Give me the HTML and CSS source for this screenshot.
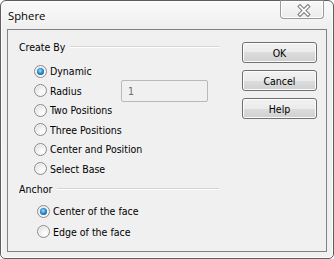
FILE: index.html
```html
<!DOCTYPE html>
<html>
<head>
<meta charset="utf-8">
<link rel="stylesheet" href="styles.css">
</head>
<body>
<div class="window">
  <div class="titlebar">
    <span class="title">Sphere</span>
    <div class="close">
      <svg width="44" height="18" viewBox="0 0 44 18">
        <path d="M20.5 5.5 L28.5 13.5 M28.5 5.5 L20.5 13.5" stroke="#7a7a7a" stroke-width="4" stroke-linecap="square" fill="none"/>
        <path d="M20.5 5.5 L28.5 13.5 M28.5 5.5 L20.5 13.5" stroke="#ffffff" stroke-width="2" stroke-linecap="square" fill="none"/>
      </svg>
    </div>
  </div>
  <div class="client">
    <div class="groups">
      <div class="group-head"><span>Create By</span><span class="rule"></span></div>
      <div class="options create">
        <div class="opt"><span class="radio on"></span><span>Dynamic</span></div>
        <div class="opt"><span class="radio"></span><span class="lbl-fixed">Radius</span><span class="textbox">1</span></div>
        <div class="opt"><span class="radio"></span><span>Two Positions</span></div>
        <div class="opt"><span class="radio"></span><span>Three Positions</span></div>
        <div class="opt"><span class="radio"></span><span>Center and Position</span></div>
        <div class="opt"><span class="radio"></span><span>Select Base</span></div>
      </div>
      <div class="group-head anchor-head"><span>Anchor</span><span class="rule"></span></div>
      <div class="options anchor">
        <div class="opt"><span class="radio on"></span><span>Center of the face</span></div>
        <div class="opt"><span class="radio"></span><span>Edge of the face</span></div>
      </div>
    </div>
    <div class="buttons">
      <div class="btn">OK</div>
      <div class="btn">Cancel</div>
      <div class="btn">Help</div>
    </div>
  </div>
</div>
</body>
</html>
```
FILE: styles.css
```css
html, body {
  margin: 0;
  padding: 0;
  background: #ffffff;
}
body {
  width: 334px;
  height: 259px;
  overflow: hidden;
  font-family: "DejaVu Sans Condensed", "DejaVu Sans", sans-serif;
  font-size: 10.5px;
  color: #000;
}
.window {
  box-sizing: border-box;
  width: 334px;
  height: 259px;
  border: 1px solid #5e5e5e;
  border-radius: 6px 6px 5px 5px;
  background: linear-gradient(#fafafa, #efefef 28px, #f0f0f0);
  box-shadow: inset 0 0 0 1px #fdfdfd;
  display: flex;
  flex-direction: column;
}
.titlebar {
  height: 28px;
  display: flex;
  align-items: center;
  padding-left: 7px;
}
.title {
  font-family: "Open Sans", "Noto Sans", sans-serif;
  font-size: 11.3px;
  color: #000;
  flex: 1;
}
.close {
  align-self: flex-start;
  margin-top: -1px;
  margin-right: 9px;
  width: 44px;
  height: 19px;
  box-sizing: border-box;
  border: 1px solid #9a9a9a;
  border-top-color: #7a7a7a;
  border-radius: 0 0 4px 4px;
  background: linear-gradient(#f8f8f8, #ececec);
  box-shadow: inset 0 0 0 1px #ffffff;
  display: flex;
}
.close svg {
  display: block;
  margin: 0 0 0 -1px;
}
.client {
  box-sizing: border-box;
  margin: 0 6px 0 6px;
  width: 320px;
  height: 223px;
  border: 1px solid #828282;
  background: #f0f0f0;
  display: flex;
  padding: 10px 0 0 11px;
}
.groups {
  width: 200px;
}
.group-head {
  height: 14px;
  display: flex;
  align-items: center;
}
.rule {
  flex: 1;
  height: 0;
  border-top: 1px solid #d5d5d5;
  border-bottom: 1px solid #ffffff;
  margin-left: 5px;
}
.options.create {
  margin-top: 7.5px;
  padding-left: 15px;
}
.options.create .opt {
  height: 19.5px;
}
.anchor-head {
  margin-top: 3px;
}
.anchor-head .rule {
  margin-left: 5px;
}
.options.anchor {
  margin-top: 5.5px;
  padding-left: 18px;
}
.options.anchor .opt {
  height: 20.5px;
}
.opt {
  display: flex;
  align-items: center;
  white-space: nowrap;
}
.radio {
  position: relative;
  flex: none;
  box-sizing: border-box;
  width: 13px;
  height: 13px;
  border-radius: 50%;
  border: 1px solid #8b8b8b;
  background: radial-gradient(circle at 65% 70%, #ffffff 0, #f4f4f4 35%, #d2d2d2 100%);
  box-shadow: inset 0 0 0 1px #f7f7f7;
  margin-right: 3px;
}
.radio.on::after {
  content: "";
  position: absolute;
  left: 2px;
  top: 2px;
  width: 7px;
  height: 7px;
  border-radius: 50%;
  background: radial-gradient(circle at 45% 40%, #9ae6ff 0, #3ea3e0 35%, #17558f 75%, #0d2f5a 100%);
}
.lbl-fixed {
  width: 71px;
}
.textbox {
  box-sizing: border-box;
  width: 87px;
  height: 22px;
  flex: none;
  border: 1px solid #b9b9b9;
  border-radius: 2px;
  background: #f0f0f0;
  color: #6d6d6d;
  padding-left: 6px;
  display: flex;
  align-items: center;
}
.buttons {
  margin-left: 23px;
  margin-top: 2px;
  display: flex;
  flex-direction: column;
  gap: 7px;
}
.btn {
  box-sizing: border-box;
  width: 75px;
  height: 21px;
  border: 1px solid #707070;
  border-radius: 3px;
  background: linear-gradient(#f2f2f2 0, #ebebeb 50%, #dddddd 50%, #cfcfcf 100%);
  box-shadow: inset 0 0 0 1px #fcfcfc;
  display: flex;
  align-items: center;
  justify-content: center;
}
```
